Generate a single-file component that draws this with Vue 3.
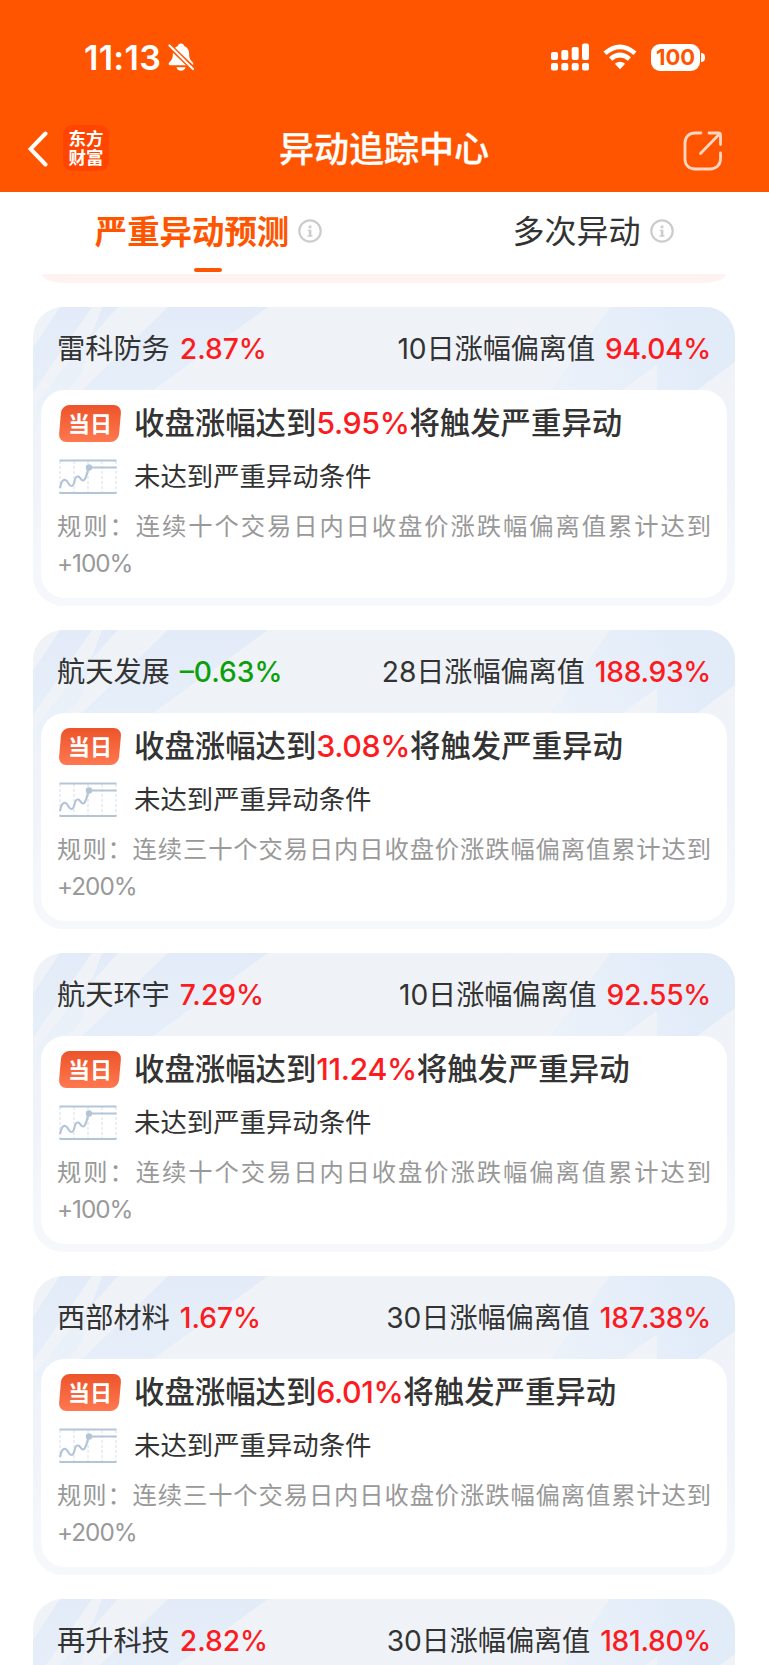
<template>
  <div class="page">
    <!-- 顶部导航 -->
    <header class="top">
      <div class="status-bar">
        <div class="status-left">
          <span class="time">11:13</span>
          <svg class="bell" viewBox="0 0 26 28">
            <path
              d="M13 0.5c-1.8 0-3 1.1-3.2 2.4C6.400 4 5 7 4.900 10.500c-0.100 5-1.200 6.600-3.600 8.800-1 1-0.900 3 1 3h21.400c1.900 0 2-2 1-3-2.400-2.200-3.500-3.800-3.600-8.800C21 7 19.600 4 16.200 2.900 16 1.600 14.800 0.500 13 0.500z"
              fill="#fff"
            />
            <path d="M8.500 24.200h9c-0.500 2.300-2.200 3.500-4.500 3.500s-4-1.200-4.500-3.500z" fill="#fff" />
            <path d="M0 1.500L26 26.500" stroke="#ff5500" stroke-width="5" />
            <path d="M1.500 2.500L25 26" stroke="#fff" stroke-width="2.200" stroke-linecap="round" />
          </svg>
        </div>
        <div class="status-right">
          <svg class="signal" viewBox="0 0 38 28" fill="#fff">
            <rect x="0" y="9" width="7" height="8" rx="2" />
            <rect x="10.300" y="7" width="7" height="10" rx="2" />
            <rect x="20.700" y="4" width="7" height="13" rx="2" />
            <rect x="31" y="0.500" width="7" height="16.500" rx="2" />
            <rect x="0" y="20" width="7" height="7.500" rx="2" />
            <rect x="10.300" y="20" width="7" height="7.500" rx="2" />
            <rect x="20.700" y="20" width="7" height="7.500" rx="2" />
            <rect x="31" y="20" width="7" height="7.500" rx="2" />
          </svg>
          <svg class="wifi" viewBox="0 0 34 26" fill="none" stroke="#fff" stroke-width="4.600">
            <path d="M2 9.200Q17 -3.600 32 9.200" />
            <path d="M7.600 15Q17 7 26.400 15" />
            <path d="M17 25.200L11.800 19.800Q17 15.600 22.200 19.800z" fill="#fff" stroke="none" />
          </svg>
          <div class="battery">
            <span class="battery-level">100</span>
            <span class="battery-cap"></span>
          </div>
        </div>
      </div>
      <div class="nav-bar">
        <div class="nav-left">
          <svg class="back" viewBox="0 0 20 36">
            <path d="M17.500 2.500L2.500 18l15 15.500" fill="none" stroke="#fff" stroke-width="4" stroke-linecap="round" />
          </svg>
          <div class="logo">
            <span>东方</span>
            <span>财富</span>
          </div>
        </div>
        <h1 class="title">异动追踪中心</h1>
        <svg class="share" viewBox="0 0 40 40" fill="none" stroke="#ffd6c2" stroke-width="2.800" stroke-linecap="round" stroke-linejoin="round">
          <path d="M18 2H12C6 2 2 6 2 12v16c0 6 4 10 10 10h15c6 0 10.500-4 10.500-10v-6" />
          <path d="M26 2h9.500c1.300 0 2 0.700 2 2v9.500" />
          <path d="M36.500 3L17.500 22.500" />
        </svg>
      </div>
    </header>

    <!-- 标签切换 -->
    <nav class="tabs">
      <button
        v-for="tab in tabs"
        :key="tab.id"
        class="tab"
        :class="{ active: activeTab === tab.id }"
        @click="activeTab = tab.id"
      >
        <span class="tab-label">{{ tab.name }}</span>
        <svg class="info" viewBox="0 0 24 24">
          <circle cx="12" cy="12" r="10.700" fill="none" stroke="#ccc" stroke-width="2.200" />
          <rect x="10.600" y="6.500" width="2.800" height="2.800" fill="#ccc" />
          <path d="M9.800 10.700h3.600v5.600h1v1.400H9.600v-1.400h1.200v-4.200h-1z" fill="#ccc" />
        </svg>
      </button>
    </nav>

    <!-- 股票列表 -->
    <main class="list">
      <div class="prev-card"></div>
      <section v-for="stock in stocks" :key="stock.name" class="card">
        <svg class="card-bg" viewBox="0 0 702 130">
          <defs>
            <linearGradient id="stripe" x1="0" y1="0" x2="0" y2="130" gradientUnits="userSpaceOnUse">
              <stop offset="0" stop-color="#e2ebf7" />
              <stop offset="0.600" stop-color="#e6eff9" />
              <stop offset="1" stop-color="#e6eff9" stop-opacity="0" />
            </linearGradient>
            <linearGradient id="stripe-right" x1="525" y1="70" x2="640" y2="10" gradientUnits="userSpaceOnUse">
              <stop offset="0" stop-color="#e5eefa" stop-opacity="0.400" />
              <stop offset="1" stop-color="#e2ecf9" />
            </linearGradient>
          </defs>
          <g fill="url(#stripe)">
            <path d="M27 0H59L0 85V41z" />
            <path d="M69 0H85L58 30z" />
            <path d="M60 24L48 68 0 126V100z" opacity="0.600" />
            <path d="M135 0H235L80 112H20L49 83z" />
          </g>
          <path d="M577 0H702V55L664 83H624V58L589 83H518z" fill="url(#stripe-right)" />
        </svg>
        <div class="card-head">
          <div class="stock">
            <span>{{ stock.name }}</span>
            <span class="num" :class="stock.change < 0 ? 'down' : 'up'">{{ formatChange(stock.change) }}</span>
          </div>
          <div class="deviation">
            <span>{{ stock.days }}日涨幅偏离值</span>
            <span class="num up">{{ stock.deviation }}%</span>
          </div>
        </div>
        <div class="card-body">
          <div class="row trigger">
            <div class="badge"><span>当日</span></div>
            <p>收盘涨幅达到<span class="up">{{ stock.trigger }}%</span>将触发严重异动</p>
          </div>
          <div class="row state">
            <svg class="chart" viewBox="0 0 58 36" fill="none">
              <path d="M1 2V34M15 2V34M29 2V34M43 2V34M57 2V34" stroke="#dde4ee" stroke-width="1.200" stroke-dasharray="3 2" />
              <path d="M0.500 1.500H57.500M0.500 34H57.500" stroke="#b5c5d8" stroke-width="2.200" />
              <path
                d="M1 29C2 23 4 20 6.500 21c3 1 3 6 6 6 4 0 2-9 6-9.500 3-0.500 3 4 5.500 4 3 0 3.500-7 6-13H57.500"
                stroke="#b5c5d8"
                stroke-width="2.200"
              />
              <circle cx="30" cy="8.500" r="3.200" fill="#b5c5d8" />
            </svg>
            <p>未达到严重异动条件</p>
          </div>
          <p class="rule">规则：连续{{ stock.period }}个交易日内日收盘价涨跌幅偏离值累计达到<span class="limit">+{{ stock.limit }}%</span></p>
        </div>
      </section>
    </main>
  </div>
</template>

<script setup>
import { ref } from 'vue'

const activeTab = ref('predict')

const tabs = [
  { id: 'predict', name: '严重异动预测' },
  { id: 'multiple', name: '多次异动' }
]

const stocks = ref([
  { name: '雷科防务', change: 2.87, days: 10, deviation: '94.04', trigger: '5.95', period: '十', limit: 100 },
  { name: '航天发展', change: -0.63, days: 28, deviation: '188.93', trigger: '3.08', period: '三十', limit: 200 },
  { name: '航天环宇', change: 7.29, days: 10, deviation: '92.55', trigger: '11.24', period: '十', limit: 100 },
  { name: '西部材料', change: 1.67, days: 30, deviation: '187.38', trigger: '6.01', period: '三十', limit: 200 },
  { name: '再升科技', change: 2.82, days: 30, deviation: '181.80', trigger: '5.20', period: '三十', limit: 200 }
])

// 跌幅用短横线显示
const formatChange = (value) => {
  return `${value < 0 ? '–' : ''}${Math.abs(value).toFixed(2)}%`
}
</script>

<style>
body {
  margin: 0;
  background: #fff;
}
</style>

<style scoped>
.page {
  width: 769px;
  height: 1665px;
  overflow: hidden;
  background: #fff;
  color: #333;
  font-family: Inter, 'Noto Sans CJK SC', sans-serif;
}

p,
h1 {
  margin: 0;
}

.top {
  height: 192px;
  background: #ff5500;
  color: #fff;
}

.status-bar {
  display: flex;
  justify-content: space-between;
  align-items: center;
  height: 114px;
  padding: 0 64px 0 84px;
}

.status-left,
.status-right {
  display: flex;
  align-items: center;
}

.time {
  width: 77px;
  font-size: 34px;
  font-weight: 600;
  letter-spacing: 0.3px;
  white-space: nowrap;
}

.bell {
  width: 26px;
  height: 28px;
  margin-left: 7px;
}

.signal {
  width: 38px;
  height: 28px;
}

.wifi {
  width: 34px;
  height: 26px;
  margin-left: 14px;
}

.battery {
  display: flex;
  align-items: center;
  margin-left: 14px;
}

.battery-level {
  width: 49px;
  height: 27px;
  border-radius: 9px;
  background: #fff;
  color: #ff5500;
  font-size: 22px;
  font-weight: 700;
  line-height: 27px;
  text-align: center;
}

.battery-cap {
  width: 4px;
  height: 9px;
  margin-left: 1px;
  border-radius: 0 4px 4px 0;
  background: #fff;
}

.nav-bar {
  display: grid;
  grid-template-columns: 1fr auto 1fr;
  align-items: center;
  height: 69px;
  padding: 0 46px 0 28px;
}

.nav-left {
  display: flex;
  align-items: center;
}

.back {
  width: 20px;
  height: 36px;
}

.logo {
  display: flex;
  flex-direction: column;
  justify-content: center;
  width: 46px;
  height: 46px;
  margin: 0 0 1px 15px;
  border-radius: 9px;
  background: #ff4500;
  font-size: 17.5px;
  font-weight: 700;
  line-height: 19px;
  text-align: center;
}

.title {
  padding-left: 17px;
  font-size: 35px;
  font-weight: 500;
  line-height: 50px;
  -webkit-text-stroke: 0.3px #fff;
}

.share {
  justify-self: end;
  width: 40px;
  height: 40px;
  margin-top: 4px;
}

.tabs {
  display: grid;
  grid-template-columns: 417px 1fr;
  height: 82px;
}

.tab {
  display: flex;
  align-items: center;
  justify-content: center;
  position: relative;
  padding: 0 0 5px;
  border: none;
  background: none;
  color: #333;
  font-family: inherit;
  font-size: 32px;
  cursor: pointer;
}

.tab-label {
  padding-bottom: 3px;
}

.tab.active {
  color: #ff5500;
  font-size: 32.4px;
  font-weight: 700;
}

.tab.active::after {
  content: '';
  position: absolute;
  bottom: 2px;
  left: 194px;
  width: 28px;
  height: 4px;
  border-radius: 2px;
  background: #ff5500;
}

.info {
  width: 24px;
  height: 24px;
  margin-left: 9px;
}

.list {
  display: flex;
  flex-direction: column;
  gap: 24px;
  padding: 0 34px 0 33px;
}

.prev-card {
  flex: none;
  height: 9px;
  margin: 0 9px;
  border-radius: 0 0 22px 22px / 0 0 9px 9px;
  background: #fff3f1;
}

.card {
  position: relative;
  flex: none;
  box-sizing: border-box;
  height: 299px;
  padding: 0 8px;
  overflow: hidden;
  border-radius: 30px;
  background: linear-gradient(180deg, #eff3f8 0%, #f0f4fa 60%, #f6f8fb 100%);
}

.card-bg {
  position: absolute;
  top: 0;
  left: 0;
  width: 702px;
  height: 130px;
}

.card-head {
  position: relative;
  display: flex;
  justify-content: space-between;
  align-items: center;
  box-sizing: border-box;
  height: 83px;
  padding: 0 16px 4px 16px;
  font-size: 28.2px;
}

.stock,
.deviation {
  display: flex;
  align-items: baseline;
  gap: 10px;
}

.deviation {
  letter-spacing: -0.1px;
}

.num {
  font-weight: 500;
}

.deviation .num {
  letter-spacing: -0.3px;
}

.up {
  color: #fc1b20;
}

.down {
  color: #0ba00b;
}

.card-body {
  position: relative;
  box-sizing: border-box;
  height: 208px;
  padding: 10px 16px 0;
  border-radius: 24px;
  background: #fff;
}

.row {
  display: flex;
  align-items: center;
}

.row p {
  padding-bottom: 4px;
}

.trigger {
  height: 46px;
  font-size: 30.4px;
  font-weight: 500;
}

.trigger .up {
  letter-spacing: -0.4px;
}

.badge {
  display: flex;
  align-items: center;
  justify-content: center;
  width: 60px;
  height: 37px;
  margin: 0 14px 0 3px;
  border-radius: 8px;
  background: linear-gradient(180deg, #ec542a, #ff7850);
  color: #fff;
  font-size: 22px;
  font-weight: 700;
  transform: skewX(-5deg);
}

.badge span {
  padding-bottom: 3px;
  transform: skewX(5deg);
}

.state {
  height: 62px;
  font-size: 26.4px;
}

.state p {
  padding-bottom: 5px;
}

.chart {
  width: 58px;
  height: 36px;
  margin: 0 17px 0 2px;
}

.rule {
  color: #999;
  font-size: 24.3px;
  line-height: 37px;
  text-align: justify;
}

.limit {
  letter-spacing: -1px;
}
</style>
